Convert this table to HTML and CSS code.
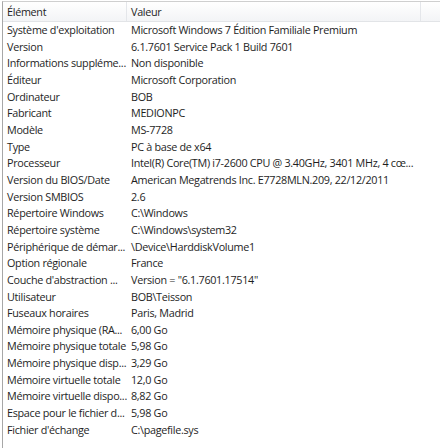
FILE: index.html
```html
<!DOCTYPE html>
<html lang="fr">
<head>
<meta charset="utf-8">
<link rel="stylesheet" href="styles.css">
</head>
<body>
<div class="list">
  <div class="header">
    <div class="hcell name">Élément</div>
    <div class="hcell value">Valeur</div>
    <div class="hcell rest"></div>
  </div>
  <div class="rows">
    <div class="row"><span class="name">Système d'exploitation</span><span class="value">Microsoft Windows 7 Édition Familiale Premium</span></div>
    <div class="row"><span class="name">Version</span><span class="value">6.1.7601 Service Pack 1 Build 7601</span></div>
    <div class="row"><span class="name">Informations suppléme...</span><span class="value">Non disponible</span></div>
    <div class="row"><span class="name">Éditeur</span><span class="value">Microsoft Corporation</span></div>
    <div class="row"><span class="name">Ordinateur</span><span class="value">BOB</span></div>
    <div class="row"><span class="name">Fabricant</span><span class="value">MEDIONPC</span></div>
    <div class="row"><span class="name">Modèle</span><span class="value">MS-7728</span></div>
    <div class="row"><span class="name">Type</span><span class="value">PC à base de x64</span></div>
    <div class="row"><span class="name">Processeur</span><span class="value">Intel(R) Core(TM) i7-2600 CPU @ 3.40GHz, 3401 MHz, 4 cœ...</span></div>
    <div class="row"><span class="name">Version du BIOS/Date</span><span class="value">American Megatrends Inc. E7728MLN.209, 22/12/2011</span></div>
    <div class="row"><span class="name">Version SMBIOS</span><span class="value">2.6</span></div>
    <div class="row"><span class="name">Répertoire Windows</span><span class="value">C:\Windows</span></div>
    <div class="row"><span class="name">Répertoire système</span><span class="value">C:\Windows\system32</span></div>
    <div class="row"><span class="name">Périphérique de démar...</span><span class="value">\Device\HarddiskVolume1</span></div>
    <div class="row"><span class="name">Option régionale</span><span class="value">France</span></div>
    <div class="row"><span class="name">Couche d'abstraction ...</span><span class="value">Version = "6.1.7601.17514"</span></div>
    <div class="row"><span class="name">Utilisateur</span><span class="value">BOB\Teisson</span></div>
    <div class="row"><span class="name">Fuseaux horaires</span><span class="value">Paris, Madrid</span></div>
    <div class="row"><span class="name">Mémoire physique (RA...</span><span class="value">6,00 Go</span></div>
    <div class="row"><span class="name">Mémoire physique totale</span><span class="value">5,98 Go</span></div>
    <div class="row"><span class="name">Mémoire physique disp...</span><span class="value">3,29 Go</span></div>
    <div class="row"><span class="name">Mémoire virtuelle totale</span><span class="value">12,0 Go</span></div>
    <div class="row"><span class="name">Mémoire virtuelle dispo...</span><span class="value">8,82 Go</span></div>
    <div class="row"><span class="name">Espace pour le fichier d...</span><span class="value">5,98 Go</span></div>
    <div class="row"><span class="name">Fichier d'échange</span><span class="value">C:\pagefile.sys</span></div>
  </div>
</div>
</body>
</html>
```
FILE: styles.css
```css
html, body {
  margin: 0;
  padding: 0;
  background: #ffffff;
}
body {
  font-family: "Open Sans", "Noto Sans", sans-serif;
  font-size: 10.8px;
  letter-spacing: -0.3px;
  color: #1e1e1e;
}
.list {
  margin: 1px 0 0 2px;
  height: 447px;
  border-left: 1px solid #a7a7a7;
  border-top: 1px solid #cfcfcf;
  overflow: hidden;
}
.header {
  display: grid;
  grid-template-columns: 124px 294px 1fr;
  height: 19px;
  background: linear-gradient(#ffffff, #f3f4f6);
  border-bottom: 1px solid #e2e4e7;
}
.hcell {
  line-height: 19px;
  white-space: nowrap;
  border-right: 1px solid #e4e6ea;
}
.hcell.name { padding-left: 4px; }
.hcell.value { padding-left: 4px; }
.hcell.rest { border-right: none; }
.row {
  display: grid;
  grid-template-columns: 124px 1fr;
  height: 16.67px;
  line-height: 16.67px;
  white-space: nowrap;
}
.row .name { padding-left: 4px; overflow: hidden; }
.row .value { padding-left: 4px; overflow: hidden; }
```
